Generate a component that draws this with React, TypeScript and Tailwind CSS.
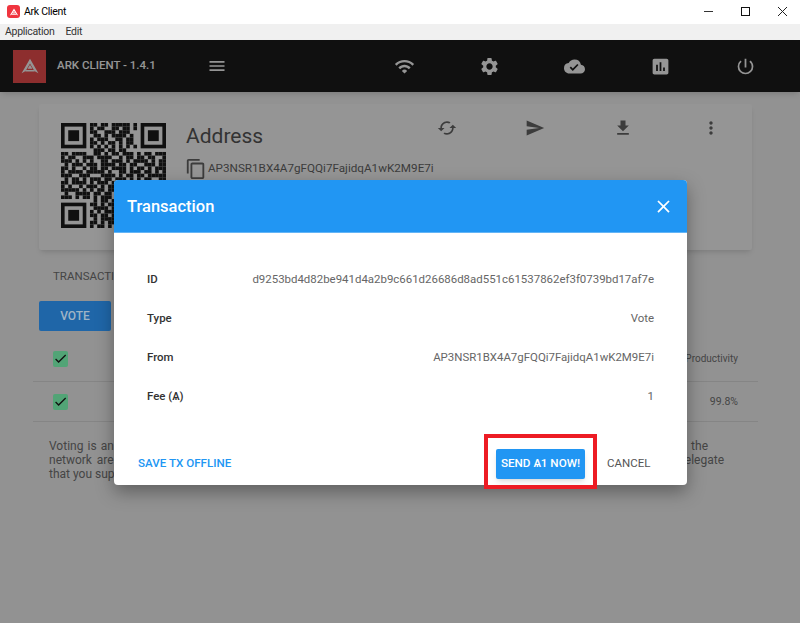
import {
    MdCached,
    MdCheck,
    MdClose,
    MdCloudDone,
    MdContentCopy,
    MdFileDownload,
    MdInsertChart,
    MdMenu,
    MdMoreVert,
    MdPowerSettingsNew,
    MdSend,
    MdSettings,
    MdWifi,
} from 'react-icons/md';

// 29x29 modules, the three finder squares are drawn separately
const qrRows = [
    '........xx.xx.xxxxx.x........',
    '........x.xx..xx.xx.x........',
    '........xx..xxx.xxx..........',
    '.........xx.x.xxxx.x.........',
    '........x.xxx..xx.xx.........',
    '........xx.x.xx.x.xx.........',
    '........x.x.x.x.x.x.x........',
    '.........xxx.xx.xx...........',
    'xx.xxxx..xx.x.xx.xxx.x.xx.xxx',
    'x.xx..xxx.xxxx..x.xx.xx.xx..x',
    'xxx.x.x.x..xx.xxx.x.xxxx.x.xx',
    '.x.xxx.xxx.xxxx.xx.xx..xxx.xx',
    'xx.x..x.xx.xx.xxxx.x.xx.x.xxx',
    'x.xxxx.xxxxx.x..xx.xxx.xx.x.x',
    'xxx..xxx...xxxx.x.xx.xx.xxxxx',
    '.x.xx.x.xxx.xx.xxx.x.x.xx..xx',
    'xx.xxxx.x.xxx.xx.xxxx.xxx.x.x',
    'x.x..x.xxx.x.xx.xx.x.xx.xxxxx',
    'xxxxx.x.x.xx.xxxx.xx.x.xx.x.x',
    '.x..xxxx.xx.xx.x.xx.xx.x.xxxx',
    'xxx.x.xx.x.xxx.xx.x.xxxxxx.xx',
    '.........x.xx.xxx.xx.xx.x.xxx',
    '........xx.x.xx.x.xxxx.xx.x.x',
    '.........xxxx.xx.xx.x.xx.xxxx',
    '........x.x.xxx.x.xx.xxx.x.xx',
    '........xx.xx.x.xx.x.x.xx.xxx',
    '.........x.xxxx.x.xxx.xx.x.xx',
    '........xx.x.xx.xx.x.xx.xx.xx',
    '........x.xx.x.xx.xxx.x.x.xxx',
];

const finders = [
    [0, 0],
    [22, 0],
    [0, 22],
];

const QrCode = () => (
    <svg viewBox="0 0 29 29" className="w-[105px] h-[105px] shrink-0">
        {qrRows.map((row, y) =>
            row.split('').map((cell, x) =>
                cell === 'x' ? <rect key={`${x}-${y}`} x={x} y={y} width="1" height="1" fill="#000" /> : null
            )
        )}
        {finders.map(([x, y]) => (
            <g key={`${x}-${y}`}>
                <rect x={x + 0.5} y={y + 0.5} width="6" height="6" fill="none" stroke="#000" strokeWidth="1" />
                <rect x={x + 2} y={y + 2} width="3" height="3" fill="#000" />
            </g>
        ))}
    </svg>
);

const ArkMark = ({ className }: { className: string }) => (
    <svg viewBox="0 0 100 100" className={className}>
        <path d="M50 14 L92 86 L72 75 L50 37 L28 75 L8 86 Z" fill="currentColor" />
        <path d="M50 44 L62 64 L38 64 Z" fill="currentColor" />
        <path d="M31 70 L69 70 L74 78 L26 78 Z" fill="currentColor" />
    </svg>
);

const navIcons = [MdWifi, MdSettings, MdCloudDone, MdInsertChart, MdPowerSettingsNew];
const cardIcons = [MdCached, MdSend, MdFileDownload, MdMoreVert];

const details = [
    { label: 'ID', value: 'd9253bd4d82be941d4a2b9c661d26686d8ad551c61537862ef3f0739bd17af7e' },
    { label: 'Type', value: 'Vote' },
    { label: 'From', value: 'AP3NSR1BX4A7gFQQi7FajidqA1wK2M9E7i' },
    { label: 'Fee (Ѧ)', value: '1' },
];

// these two sit above the backdrop, so the colours are the dimmed ones
const Check = () => (
    <div className="relative z-10 w-[15px] h-[16px] rounded-[2px] bg-[#52a476] flex items-center justify-center text-[#111]">
        <MdCheck size={15} />
    </div>
);

const App = () => {
    return (
        <div className="relative w-[800px] h-[623px] overflow-hidden bg-white font-['Roboto',sans-serif]">
            {/* window chrome */}
            <div className="h-[24px] flex items-center bg-white pl-[7px] pr-[13px]">
                <div className="w-[13px] h-[13px] -mt-[1px] rounded-[3px] bg-[#f0353f] flex items-center justify-center text-white">
                    <ArkMark className="w-[10px] h-[10px]" />
                </div>
                <span className="ml-[4px] -mt-[1px] text-[10.5px] tracking-[-0.3px] text-black">Ark Client</span>
                <div className="ml-auto -mt-[2px] flex items-center gap-[28px]">
                    <svg width="9" height="9" viewBox="0 0 9 9"><path d="M0 4.5H9" stroke="#333" /></svg>
                    <svg width="9" height="9" viewBox="0 0 9 9"><rect x="0.5" y="0.5" width="8" height="8" fill="none" stroke="#111" /></svg>
                    <svg width="9" height="9" viewBox="0 0 9 9"><path d="M0 0L9 9M9 0L0 9" stroke="#222" /></svg>
                </div>
            </div>
            <div className="h-[16px] flex items-center bg-[#f0f0f0] pl-[5px] gap-[11px] text-[10.5px] tracking-[-0.3px] text-[#333]">
                <span>Application</span>
                <span>Edit</span>
            </div>

            {/* app */}
            <div className="h-[583px] bg-[#fafafa]">
                <div className="h-[52px] bg-black flex items-center pl-[13px] shadow-md">
                    <div className="w-[33px] h-[33px] bg-[#ef3b3b] flex items-center justify-center text-white">
                        <ArkMark className="w-[20px] h-[20px]" />
                    </div>
                    <span className="ml-[11px] w-[98px] text-[11.5px] font-medium text-white whitespace-nowrap">ARK CLIENT - 1.4.1</span>
                    <MdMenu size={20} className="ml-[52px] text-white" />
                    <div className="ml-[135px] w-[426px] grid grid-cols-5 text-white">
                        {navIcons.map((Icon, i) => (
                            <div key={i} className="flex justify-center">
                                <Icon size={21} />
                            </div>
                        ))}
                    </div>
                </div>

                <div className="mx-[39px] mt-[12px] mr-[48px] h-[146px] bg-white rounded-[2px] shadow-md flex pl-[22px] pt-[19px]">
                    <QrCode />
                    <div className="ml-[20px] w-[251px]">
                        <h1 className="text-[21px] leading-[26px] text-[#444]">Address</h1>
                        <div className="mt-[9px] flex items-center text-[11.7px] text-[#555]">
                            <MdContentCopy size={22} className="-ml-[1px] text-[#555]" />
                            <span className="ml-[1px]">AP3NSR1BX4A7gFQQi7FajidqA1wK2M9E7i</span>
                        </div>
                    </div>
                    <div className="flex gap-[68px] h-[20px] -mt-[5px] text-[#555]">
                        {cardIcons.map((Icon, i) => (
                            <Icon key={i} size={20} />
                        ))}
                    </div>
                </div>

                <div className="ml-[53px] mt-[19px] text-[11.5px] leading-[14px] text-[#666]">TRANSACTIONS</div>
                <button className="relative z-10 ml-[39px] mt-[18px] w-[72px] h-[30px] rounded-[2px] bg-[#1f66a8] text-[#9fb4c6] text-[12px] font-medium block">
                    VOTE
                </button>

                <div className="mx-[33px] mt-[9px] mr-[42px] text-[#666]">
                    <div className="h-[42px] flex items-center justify-between pl-[20px] pr-[20px] pb-[4px] border-b border-[#e0e0e0]">
                        <Check />
                        <span className="text-[10px]">Productivity</span>
                    </div>
                    <div className="h-[40px] flex items-center justify-between pl-[20px] pr-[20px] border-b border-[#e0e0e0]">
                        <Check />
                        <span className="text-[10.5px]">99.8%</span>
                    </div>
                </div>

                <div className="ml-[49px] mt-[17px] text-[12px] leading-[14px] text-[#666] whitespace-nowrap">
                    <p className="w-[659px] [text-align-last:justify]">Voting is an optional process that helps to secure the network, because the chosen delegates with the most votes in the</p>
                    <p className="w-[675px] [text-align-last:justify]">network are responsible for forging new blocks, and each of the holders can vote for one trusted and productive delegate</p>
                    <p>that you support</p>
                </div>
            </div>

            {/* backdrop and dialog */}
            <div className="absolute left-0 right-0 top-[40px] bottom-0 bg-[#212121]/[0.48]" />
            <div className="absolute z-20 left-[114px] top-[180px] w-[573px] h-[305px] bg-white rounded-[4px] shadow-[0_7px_18px_rgba(0,0,0,0.35)] overflow-hidden">
                <div className="h-[53px] bg-[#2196f3] border-b border-[#64b5f6] flex items-center justify-between pl-[13px] pr-[13px] pt-[1px] text-white">
                    <h2 className="mt-[1px] text-[16.5px] font-medium">Transaction</h2>
                    <MdClose size={21} />
                </div>
                <div className="pl-[33px] pr-[33px] pt-[27px]">
                    {details.map(row => (
                        <div key={row.label} className="h-[39px] flex items-center justify-between text-[11.45px]">
                            <span className="font-medium text-[#333]">{row.label}</span>
                            <span className="text-[#666]">{row.value}</span>
                        </div>
                    ))}
                </div>
                <div className="mt-[33px] flex items-center pl-[24px]">
                    <button className="text-[11.6px] font-medium text-[#2196f3]">SAVE TX OFFLINE</button>
                    <button className="ml-auto w-[89px] h-[30px] rounded-[2px] bg-[#2196f3] text-white text-[11.7px] font-medium shadow-md">SEND Ѧ1 NOW!</button>
                    <button className="ml-[22px] mr-[37px] w-[43px] text-[11.5px] text-[#555]">CANCEL</button>
                </div>
            </div>
            {/* highlight drawn on top of the screenshot */}
            <div className="absolute z-30 left-[484px] top-[434px] w-[113px] h-[55px] border-[4px] border-[#ed1c24]" />
        </div>
    );
};

export default App;
